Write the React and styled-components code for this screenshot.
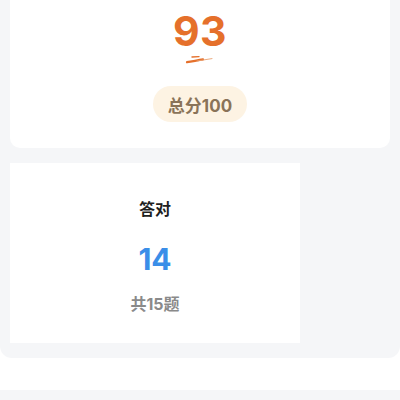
import React from "react";
import styled, { createGlobalStyle } from "styled-components";

const GlobalStyle = createGlobalStyle`
  body {
    margin: 0;
    background: #ffffff;
    font-family: Inter, "Noto Sans CJK SC", sans-serif;
  }
`;

const Page = styled.div`
  width: 400px;
`;

const Panel = styled.div`
  background: #f5f6f8;
  padding: 0 10px 15px;
  border-radius: 0 0 12px 12px;
`;

const ScoreCard = styled.div`
  background: #ffffff;
  height: 148px;
  border-radius: 0 0 10px 10px;
  display: flex;
  flex-direction: column;
  align-items: center;
  padding-top: 11px;
  box-sizing: border-box;
`;

const Score = styled.div`
  font-size: 41px;
  font-weight: 700;
  line-height: 40px;
  color: #e5702b;
  letter-spacing: 0.5px;
`;

const Scribble = styled.svg`
  display: block;
  margin-top: 3px;
`;

const TotalPill = styled.div`
  margin-top: 20px;
  height: 36px;
  padding: 0 15px;
  border-radius: 18px;
  background: #fdf3e3;
  color: #8a7358;
  font-size: 17px;
  font-weight: 700;
  display: flex;
  align-items: center;
`;

const StatCard = styled.div`
  margin-top: 15px;
  width: 290px;
  height: 180px;
  background: #ffffff;
  display: flex;
  flex-direction: column;
  align-items: center;
  padding-top: 36px;
  box-sizing: border-box;
`;

const StatLabel = styled.div`
  font-size: 16px;
  font-weight: 700;
  color: #1f1f1f;
  line-height: 20px;
`;

const StatValue = styled.div`
  margin-top: 22px;
  font-size: 30px;
  font-weight: 700;
  color: #3a8ee8;
  line-height: 36px;
`;

const StatSub = styled.div`
  margin-top: 17px;
  font-size: 16px;
  font-weight: 700;
  color: #8a8a8a;
  line-height: 20px;
`;

const Spacer = styled.div`
  height: 32px;
`;

const NextPanel = styled.div`
  background: #f5f6f8;
  height: 20px;
`;

export default function App() {
  return (
    <Page>
      <GlobalStyle />
      <Panel>
        <ScoreCard>
          <Score>93</Score>
          <Scribble width="30" height="12" viewBox="0 0 30 12">
            <path d="M7 3 L14 2.6" stroke="#e5702b" strokeWidth="1.4" strokeLinecap="round" fill="none" />
            <path d="M2 8.2 C8 7.2 13 6.2 18 5.4" stroke="#e5702b" strokeWidth="2.2" strokeLinecap="round" fill="none" />
            <path d="M12 7 L27 4.6" stroke="#e9a070" strokeWidth="0.9" strokeLinecap="round" fill="none" />
          </Scribble>
          <TotalPill>总分100</TotalPill>
        </ScoreCard>
        <StatCard>
          <StatLabel>答对</StatLabel>
          <StatValue>14</StatValue>
          <StatSub>共15题</StatSub>
        </StatCard>
      </Panel>
      <Spacer />
      <NextPanel />
    </Page>
  );
}
